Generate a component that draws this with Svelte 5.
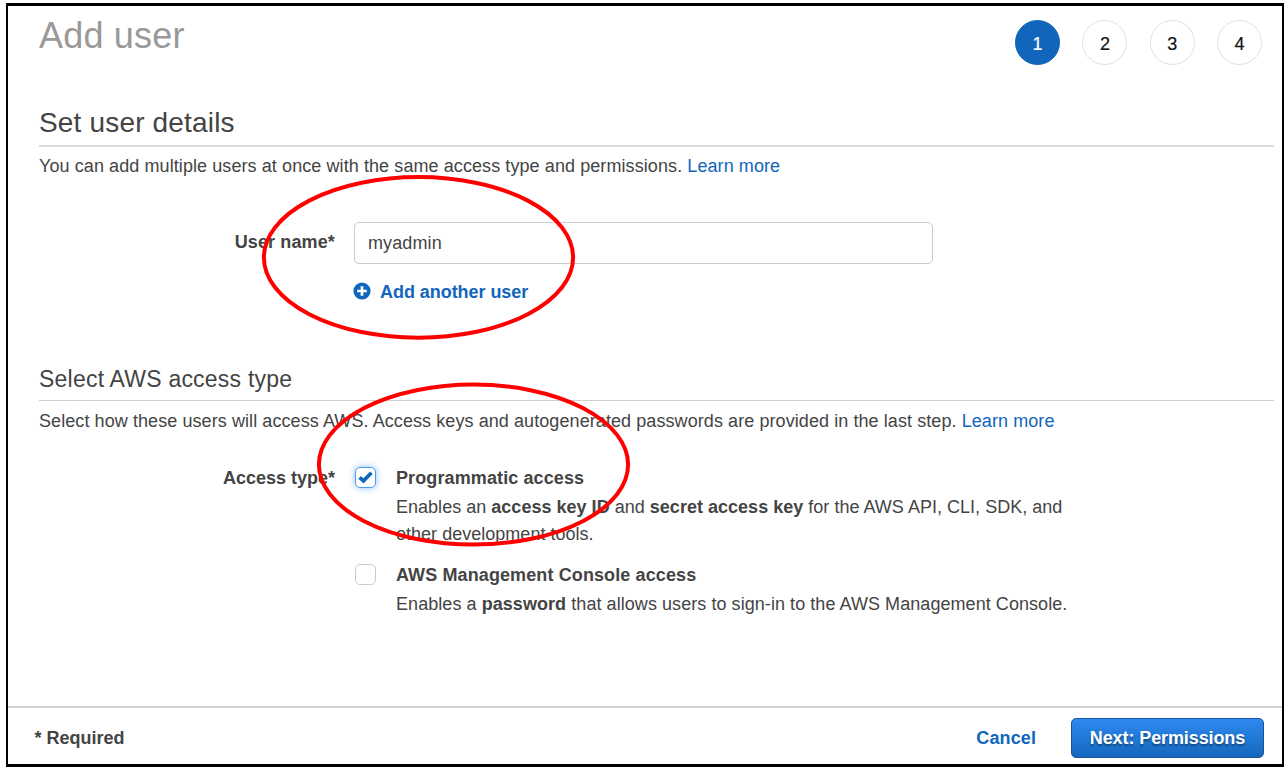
<script>
  const steps = [1, 2, 3, 4];
  const current = 1;
  let userName = $state('myadmin');
  let programmatic = $state(true);
  let consoleAccess = $state(false);
</script>

<main class="wizard">
  <header>
    <h1>Add user</h1>
    <ol class="steps">
      {#each steps as step}
        <li class:active={step === current}>{step}</li>
      {/each}
    </ol>
  </header>

  <section class="details">
    <h2>Set user details</h2>
    <p class="intro">You can add multiple users at once with the same access type and permissions. <a href="#learn">Learn more</a></p>
    <div class="row user-row">
      <label class="label" for="user">User name*</label>
      <div class="field">
        <input id="user" type="text" bind:value={userName} />
        <button class="add" type="button">
          <svg width="18" height="18" viewBox="0 0 18 18" aria-hidden="true">
            <circle cx="9" cy="9" r="8.6" fill="#1166bb" />
            <path d="M9 4.2v9.6M4.2 9h9.6" stroke="#fff" stroke-width="2.7" />
          </svg>
          <span>Add another user</span>
        </button>
      </div>
    </div>
  </section>

  <section class="access">
    <h3>Select AWS access type</h3>
    <p class="intro">Select how these users will access AWS. Access keys and autogenerated passwords are provided in the last step. <a href="#keys">Learn more</a></p>
    <div class="row access-row">
      <span class="label">Access type*</span>
      <div class="options">
        <div class="option">
          <button class="box" class:checked={programmatic} type="button" role="checkbox" aria-checked={programmatic} aria-label="Programmatic access" onclick={() => (programmatic = !programmatic)}>
            {#if programmatic}
              <svg width="15" height="13" viewBox="0 0 15 13"><path d="M1.6 6.3 5.5 9.9 13.4 1.8" fill="none" stroke="#1166bb" stroke-width="3.7" /></svg>
            {/if}
          </button>
          <div class="text">
            <strong>Programmatic access</strong>
            <p>Enables an <b>access key ID</b> and <b>secret access key</b> for the AWS API, CLI, SDK, and<br />other development tools.</p>
          </div>
        </div>
        <div class="option">
          <button class="box" class:checked={consoleAccess} type="button" role="checkbox" aria-checked={consoleAccess} aria-label="AWS Management Console access" onclick={() => (consoleAccess = !consoleAccess)}></button>
          <div class="text">
            <strong>AWS Management Console access</strong>
            <p>Enables a <b>password</b> that allows users to sign-in to the AWS Management Console.</p>
          </div>
        </div>
      </div>
    </div>
  </section>

  <footer>
    <span class="required">* Required</span>
    <button class="cancel" type="button">Cancel</button>
    <button class="next" type="button">Next: Permissions</button>
  </footer>

  <svg class="marks" width="1284" height="768" viewBox="0 0 1284 768" fill="none" stroke="#f00" stroke-width="4" aria-hidden="true">
    <ellipse cx="418.5" cy="257.4" rx="154.6" ry="80.3" />
    <ellipse cx="473.5" cy="464.6" rx="154.6" ry="80" />
  </svg>
</main>

<style>
  :global(body) { background: #fff; }
  * { box-sizing: border-box; }
  .wizard {
    display: flex;
    flex-direction: column;
    width: 1278px;
    height: 764px;
    margin: 3px 0 0 6px;
    border: solid #000;
    border-width: 3px 2px 3px 2px;
    color: #444;
    font: 18px/24px "Liberation Sans", Arial, sans-serif;
    overflow: hidden;
  }
  h1, h2, h3, p, ol { margin: 0; padding: 0; font-weight: normal; }
  a { color: #1166bb; text-decoration: none; }
  button { font: inherit; letter-spacing: inherit; padding: 0; border: 0; background: none; color: #1166bb; }
  header {
    display: flex;
    justify-content: space-between;
    height: 101px;
    padding: 10px 20px 0 31px;
  }
  h1 { font-size: 36px; line-height: 40px; color: #999; letter-spacing: 0.2px; }
  .steps { display: flex; gap: 22.3px; margin-top: 4px; list-style: none; }
  .steps li {
    width: 45px;
    height: 45px;
    border: 1px solid #e0e0e0;
    border-radius: 50%;
    color: #111;
    line-height: 46px;
    text-align: center;
    -webkit-text-stroke: 0.2px;
  }
  .steps .active { background: #1166bb; border-color: #1166bb; color: #fff; }
  .details { height: 256px; padding: 0 8px 0 31px; }
  .access { flex: 1; padding: 0 8px 0 31px; }
  h2 { height: 40px; font-size: 28px; line-height: 32px; border-bottom: 2px solid #ddd; letter-spacing: 0.17px; }
  h3 { height: 38px; font-size: 23px; line-height: 32px; border-bottom: 1px solid #d0d0d0; letter-spacing: 0.22px; }
  .intro { margin-top: 7px; white-space: nowrap; letter-spacing: 0.085px; }
  .access .intro { margin-top: 8px; letter-spacing: 0.08px; }
  .row { display: grid; grid-template-columns: 296px 1fr; column-gap: 19px; }
  .label { text-align: right; font-weight: bold; }
  .user-row { margin-top: 44px; }
  .user-row .label { margin-top: 8px; letter-spacing: 0.12px; }
  input {
    display: block;
    width: 579px;
    height: 42px;
    padding: 1px 14px 0 13px;
    border: 1px solid #ccc;
    border-radius: 5px;
    outline: 0;
    color: #444;
    font: inherit;
    letter-spacing: 0.12px;
  }
  .add { display: flex; align-items: center; gap: 9px; margin-top: 16px; margin-left: -1px; font-weight: bold; letter-spacing: -0.05px; }
  .add svg { margin-top: -3px; }
  .access-row { margin-top: 33px; }
  .options { display: flex; flex-direction: column; gap: 15px; }
  .option { display: flex; }
  .box {
    display: grid;
    place-items: center;
    width: 21px;
    height: 21px;
    margin: 1px 20px 0 1px;
    border: 1px solid #ccc;
    border-radius: 5px;
    background: #fff;
  }
  .box.checked { border-color: #4a9bee; box-shadow: 0 0 7px #8cc0f8; }
  .text strong { display: block; line-height: 25px; letter-spacing: 0.11px; }
  .text p { margin-top: 3px; line-height: 27px; white-space: nowrap; letter-spacing: 0.02px; }
  .option + .option p { letter-spacing: 0.06px; }
  footer {
    display: flex;
    align-items: center;
    height: 58px;
    padding: 3px 18px 0 26.5px;
    border-top: 2px solid #d5d5d5;
    font-weight: bold;
  }
  .required { flex: 1; padding-top: 1px; }
  .cancel { margin-right: 35px; padding-top: 1px; letter-spacing: 0.1px; }
  .next {
    width: 193px;
    height: 40px;
    padding-top: 1px;
    border: 1px solid #17549b;
    border-radius: 5px;
    background: linear-gradient(#2e8af0, #1467bd);
    color: #fff;
    letter-spacing: -0.1px;
    text-shadow: 0 2px 2px rgba(0, 0, 0, 0.4);
  }
  .marks { position: absolute; left: 0; top: 0; pointer-events: none; }
</style>
